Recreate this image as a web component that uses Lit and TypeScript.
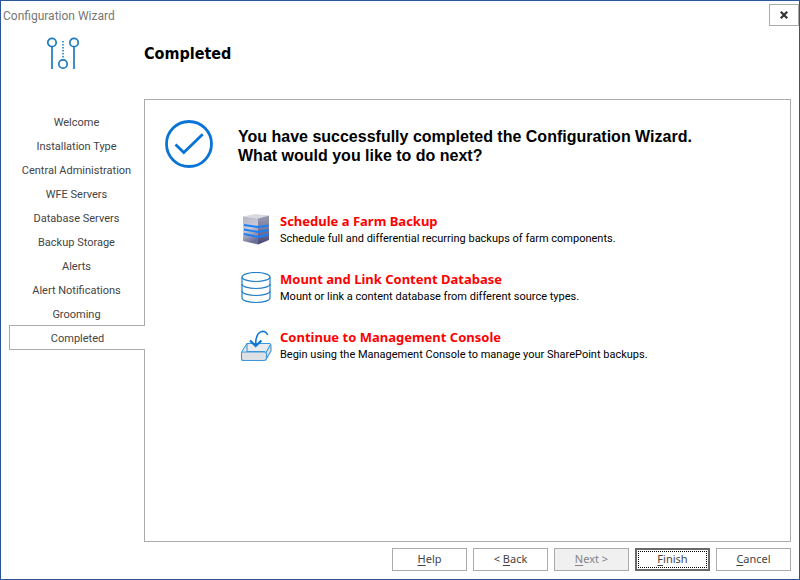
import { LitElement, html, css, TemplateResult } from "lit";
import { customElement, property } from "lit/decorators.js";

const STEPS = [
  "Welcome",
  "Installation Type",
  "Central Administration",
  "WFE Servers",
  "Database Servers",
  "Backup Storage",
  "Alerts",
  "Alert Notifications",
  "Grooming",
  "Completed",
];

const farmIcon = html`<svg viewBox="0 0 32 32" width="32" height="32" aria-hidden="true">
  <defs>
    <linearGradient id="side" x1="0" y1="0" x2="0" y2="1">
      <stop offset="0" stop-color="#9c9cb0" />
      <stop offset="0.5" stop-color="#77779c" />
      <stop offset="1" stop-color="#464676" />
    </linearGradient>
    <linearGradient id="front" x1="0" y1="0" x2="0.3" y2="1">
      <stop offset="0" stop-color="#b4b5c6" />
      <stop offset="0.5" stop-color="#c9c9d8" />
      <stop offset="1" stop-color="#6d6e98" />
    </linearGradient>
  </defs>
  <path d="M3 2.500 15 0 29 1.500 18 4.500Z" fill="#d9d9e2" />
  <path d="M3 2.500 18 4.500V30.500L3 27Z" fill="url(#front)" />
  <path d="M18 4.500 29 1.500V26L18 30.500Z" fill="url(#side)" />
  <g fill="none" stroke="#1c80f4" stroke-width="1.900">
    <path d="M4 11 18 13 28.500 11.500M4 15.500 18 18 28.500 16M4 20 18 23 28.500 20.500" />
  </g>
</svg>`;

const databaseIcon = html`<svg viewBox="0 0 32 32" width="32" height="32" aria-hidden="true">
  <g fill="none" stroke="#1f7fc4" stroke-width="1.200">
    <ellipse cx="16" cy="5" rx="14" ry="4.500" />
    <path d="M2 5V26C2 28.500 8 30.500 16 30.500S30 28.500 30 26V5" />
    <path d="M2 12C2 14.500 8 16.500 16 16.500S30 14.500 30 12M2 19C2 21.500 8 23.500 16 23.500S30 21.500 30 19" />
  </g>
</svg>`;

const consoleIcon = html`<svg viewBox="0 0 32 32" width="32" height="32" aria-hidden="true">
  <path d="M2 21.500 7 13H31L27 21.500Z" fill="#e9ebee" />
  <path d="M1.500 22H26.500V30.500H1.500ZM26.500 22 31 14V21L26.500 30.500Z" fill="#dde0e5" />
  <g fill="none" stroke="#3c97da" stroke-width="1.100" stroke-linejoin="round">
    <path d="M7 13.500 2.500 20.500Q1.500 22 1.500 23.500V28.500Q1.500 30.500 3.500 30.500H24Q26 30.500 26.500 28.500L31 21V15.500Q31 13.500 29.500 13.500H7Z" />
    <path d="M2 22H24.500Q26.500 22 26.500 24V29M26 22.500 30.500 14.500M7 13.500V21.500H25" />
  </g>
  <path d="M27.700 5C25.500 -1 15 -1 15.700 16" fill="none" stroke="#0f78d4" stroke-width="1.600" />
  <path d="M10 10.500 15.700 16 21.400 10.500" fill="none" stroke="#0f78d4" stroke-width="2.300" />
</svg>`;

interface NextAction {
  title: string;
  text: string;
  icon: TemplateResult;
}

const ACTIONS: NextAction[] = [
  {
    title: "Schedule a Farm Backup",
    text: "Schedule full and differential recurring backups of farm components.",
    icon: farmIcon,
  },
  {
    title: "Mount and Link Content Database",
    text: "Mount or link a content database from different source types.",
    icon: databaseIcon,
  },
  {
    title: "Continue to Management Console",
    text: "Begin using the Management Console to manage your SharePoint backups.",
    icon: consoleIcon,
  },
];

@customElement("wizard-steps")
export class WizardSteps extends LitElement {
  @property() current = "";

  static styles = css`
    :host {
      display: block;
    }
    .list {
      list-style: none;
      margin: 0;
      padding: 12px 0 0;
    }
    .step {
      height: 24px;
      line-height: 24px;
      text-align: center;
      white-space: nowrap;
    }
    .current {
      position: relative;
      box-sizing: border-box;
      height: 25px;
      margin: -2px -1px 0 0;
      padding-top: 1px;
      border: 1px solid #ababab;
      border-right: 0;
      background: #fff;
    }
  `;

  render() {
    return html`<ol class="list">
      ${STEPS.map((s) =>
        s === this.current
          ? html`<li class="step current" aria-current="step">${s}</li>`
          : html`<li class="step">${s}</li>`
      )}
    </ol>`;
  }
}

@customElement("app-root")
export class AppRoot extends LitElement {
  static styles = css`
    :host {
      display: block;
      font: 11px/16px Roboto, sans-serif;
      color: #444;
    }
    .window {
      box-sizing: border-box;
      min-height: 100vh;
      display: flex;
      flex-direction: column;
      border: 1px solid #2b579a;
      background: #fff;
    }
    .titlebar {
      display: flex;
      justify-content: space-between;
      padding: 3px 0 0 2px;
    }
    .caption {
      font: 12px/24px Roboto, sans-serif;
      color: #777;
    }
    .close {
      display: grid;
      place-items: center;
      width: 30px;
      height: 22px;
      padding: 0;
      border: 1px solid #ababab;
      background: #fff;
    }
    .header {
      display: grid;
      grid-template-columns: 143px 1fr;
      height: 71px;
    }
    .logo {
      margin: 8px 0 0 46px;
    }
    .heading {
      margin: 15px 0 0;
      font: bold 16px/22px "DejaVu Sans Condensed", "DejaVu Sans", sans-serif;
      color: #000;
    }
    .body {
      flex: 1;
      display: grid;
      grid-template-columns: 135px 1fr;
      padding: 0 8px;
    }
    .panel {
      display: grid;
      grid-template-columns: 48px 1fr;
      align-content: start;
      column-gap: 25px;
      padding: 20px;
      border: 1px solid #ababab;
    }
    .message {
      margin: 7px 0 0;
      font: bold 16px/19px "Liberation Sans", Arial, sans-serif;
      color: #000;
    }
    .actions {
      grid-column: 2;
      display: grid;
      gap: 22px;
      margin: 46px 0 0;
      padding: 0 0 0 2px;
      list-style: none;
    }
    .action {
      display: grid;
      grid-template-columns: 32px 1fr;
      column-gap: 8px;
    }
    .link {
      display: block;
      font: bold 13px/14px "Noto Sans", sans-serif;
      color: #f00;
      text-decoration: none;
    }
    .text {
      margin: 0;
      line-height: 22px;
      color: #000;
    }
    .footer {
      display: flex;
      justify-content: flex-end;
      gap: 6px;
      padding: 6px 8px 8px;
    }
    .button {
      box-sizing: border-box;
      width: 75px;
      height: 23px;
      padding: 0 0 2px;
      border: 1px solid #ababab;
      background: #fff;
      font: 11px/16px "Noto Sans", sans-serif;
      color: #444;
    }
    .button:disabled {
      background: #f0f0f0;
      color: #838383;
    }
    .default {
      border: 2px solid #6a6a6a;
      outline: 1px dotted #000;
      outline-offset: -4px;
    }
    .key {
      text-decoration: underline;
      text-underline-offset: 2px;
    }
  `;

  render() {
    return html`
      <div class="window">
        <div class="titlebar">
          <span class="caption">Configuration Wizard</span>
          <button class="close" aria-label="Close">
            <svg viewBox="0 0 8 8" width="8" height="8" aria-hidden="true">
              <path d="M.8 .8 7.200 7.200M7.200 .8 .8 7.200" stroke="#333" stroke-width="2.200" />
            </svg>
          </button>
        </div>
        <header class="header">
          <svg class="logo" viewBox="0 0 32 36" width="32" height="36" aria-hidden="true">
            <g fill="none" stroke="#1f7bbf" stroke-width="1.700">
              <circle cx="5" cy="6.500" r="4.200" />
              <circle cx="27" cy="6.500" r="4.200" />
              <circle cx="16" cy="28" r="4.200" />
              <path d="M5 11V33M27 11V33" />
              <path d="M16 5V24" stroke-width="1.500" stroke-dasharray="1.500 1.500" />
            </g>
          </svg>
          <h1 class="heading">Completed</h1>
        </header>
        <div class="body">
          <wizard-steps current="Completed"></wizard-steps>
          <main class="panel">
            <svg viewBox="0 0 48 48" width="48" height="48" aria-hidden="true">
              <g fill="none" stroke="#0a74d6" stroke-width="2.800">
                <circle cx="24" cy="24" r="22.500" />
                <path d="M10.500 24.500 18.800 32.500 37.700 14.300" />
              </g>
            </svg>
            <h2 class="message">
              You have successfully completed the Configuration Wizard.<br />What would you like to do next?
            </h2>
            <ul class="actions">
              ${ACTIONS.map(
                (a) => html`<li class="action">
                  ${a.icon}
                  <div>
                    <a class="link" href="#">${a.title}</a>
                    <p class="text">${a.text}</p>
                  </div>
                </li>`
              )}
            </ul>
          </main>
        </div>
        <footer class="footer">
          <button class="button"><span class="key">H</span>elp</button>
          <button class="button">&lt; <span class="key">B</span>ack</button>
          <button class="button" disabled><span class="key">N</span>ext &gt;</button>
          <button class="button default"><span class="key">F</span>inish</button>
          <button class="button"><span class="key">C</span>ancel</button>
        </footer>
      </div>
    `;
  }
}
